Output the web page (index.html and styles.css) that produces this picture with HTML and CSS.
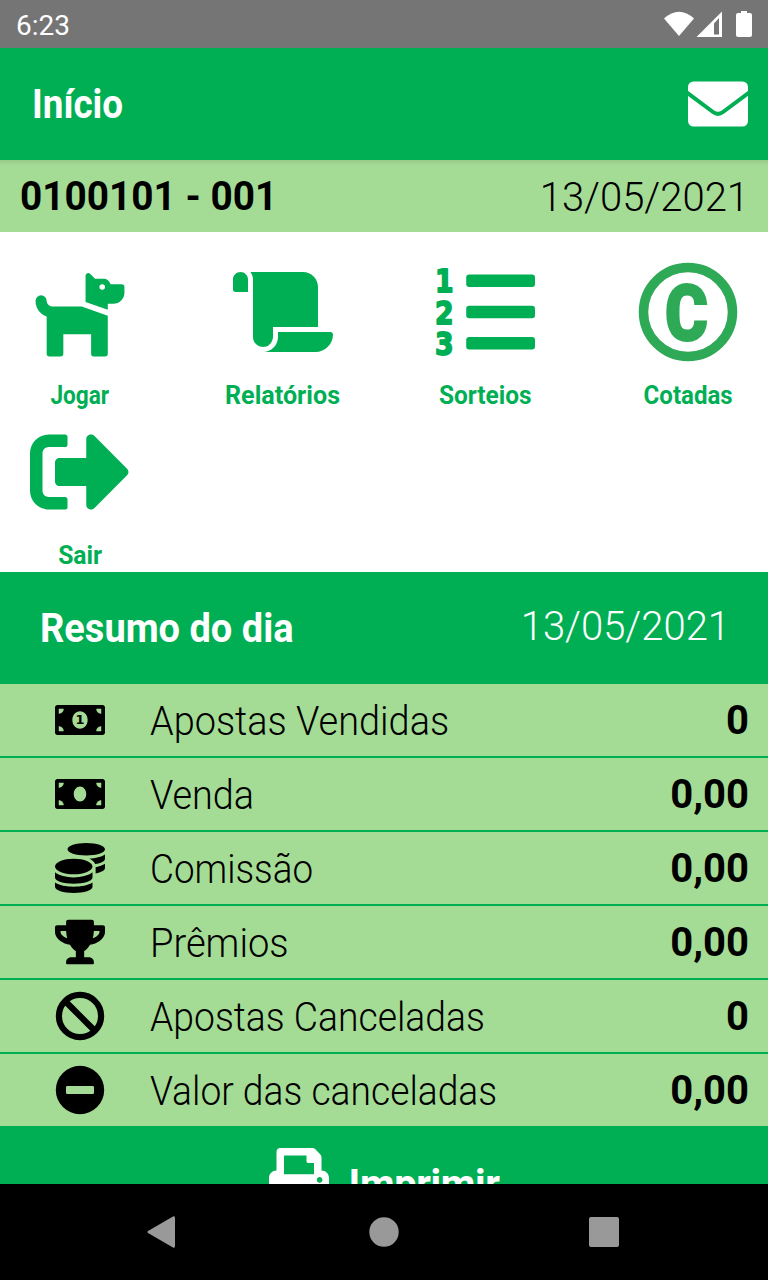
FILE: index.html
```html
<!DOCTYPE html>
<html lang="pt-BR">
<head>
<meta charset="utf-8">
<title>Início</title>
<link rel="stylesheet" href="styles.css">
</head>
<body>
<div class="status-bar">
  <span class="clock">6:23</span>
  <svg class="status-icons" viewBox="0 0 90 28" width="90" height="28">
    <path d="M1 8.500Q16-5 31 8.500L16 26z"/>
    <path fill-rule="evenodd" d="M33.500 27L59 1.500V27zM51 13.500V24.500H56V8z"/>
    <path d="M78 1h6v2h3q2 0 2 2v20q0 2-2 2H75q-2 0-2-2V5q0-2 2-2h3z"/>
  </svg>
</div>
<header class="app-bar">
  <h1 class="title inicio">Início</h1>
  <svg class="mail" viewBox="0 0 60 46" width="60" height="46">
    <rect y=".5" width="60" height="45" rx="5.500" fill="#fff"/>
    <path d="M-1 11.700L25 31Q30 34.800 35 31L61 11.700" fill="none" stroke="#00af54" stroke-width="4"/>
  </svg>
</header>
<div class="account">
  <span class="code">0100101 - 001</span>
  <span class="date">13/05/2021</span>
</div>
<nav class="menu">
  <a class="item"><svg viewBox="0 0 576 512" width="100" height="100"><path d="M298.060,224,448,277.550V496a16,16,0,0,1-16,16H368a16,16,0,0,1-16-16V384H192V496a16,16,0,0,1-16,16H112a16,16,0,0,1-16-16V282.090C58.840,268.840,32,233.660,32,192a32,32,0,0,1,64,0,32.060,32.060,0,0,0,32,32ZM544,112v32a64,64,0,0,1-64,64H448v35.580L320,197.870V48c0-14.250,17.220-21.390,27.310-11.310L374.590,64h53.630c10.910,0,23.750,7.920,28.620,17.690L464,96h64A16,16,0,0,1,544,112Zm-112,0a16,16,0,1,0-16,16A16,16,0,0,0,432,112Z"/></svg><span class="label l-jogar">Jogar</span></a>
  <a class="item"><svg viewBox="0 0 640 512" width="100" height="100"><path d="M48 0C21.530 0 0 21.530 0 48v64c0 8.840 7.160 16 16 16h80V48C96 21.530 74.470 0 48 0zm208 412.570V352h288V96c0-52.940-43.060-96-96-96H111.590C121.740 13.410 128 29.920 128 48v368c0 38.870 34.650 69.650 74.750 63.120C234.220 474 256 444.460 256 412.570zM288 384v32c0 52.930-43.060 96-96 96h336c61.860 0 112-50.140 112-112 0-8.840-7.160-16-16-16H288z"/></svg><span class="label l-rel">Relatórios</span></a>
  <a class="item"><svg viewBox="0 0 100 100" width="100" height="100">
    <rect x="31.200" y="12.500" width="68.800" height="12.500" rx="3"/><rect x="31.200" y="43.750" width="68.800" height="12.500" rx="3"/><rect x="31.200" y="75" width="68.800" height="12.500" rx="3"/>
    <g class="digits"><text x="0" y="30" textLength="18.500" lengthAdjust="spacingAndGlyphs">1</text><text x="0" y="61.700" textLength="18.500" lengthAdjust="spacingAndGlyphs">2</text><text x="0" y="92.500" textLength="18.500" lengthAdjust="spacingAndGlyphs">3</text></g></svg><span class="label l-sort">Sorteios</span></a>
  <a class="item"><svg viewBox="0 0 100 100" width="100" height="100"><circle cx="50" cy="50" r="44.500" fill="none" stroke="#2eaa57" stroke-width="9.500"/><text class="coin-letter" x="27" y="78" textLength="43" lengthAdjust="spacingAndGlyphs">C</text></svg><span class="label l-cot">Cotadas</span></a>
  <a class="item"><svg viewBox="0 0 512 512" width="100" height="100"><path d="M497 273L329 441c-15 15-41 4.500-41-17v-96H152c-13.300 0-24-10.700-24-24v-96c0-13.300 10.700-24 24-24h136V88c0-21.400 25.900-32 41-17l168 168c9.300 9.400 9.300 24.600 0 34zM192 436v-40c0-6.600-5.400-12-12-12H96c-17.700 0-32-14.300-32-32V160c0-17.700 14.300-32 32-32h84c6.600 0 12-5.400 12-12V76c0-6.600-5.400-12-12-12H96c-53 0-96 43-96 96v192c0 53 43 96 96 96h84c6.600 0 12-5.400 12-12z"/></svg><span class="label l-sair">Sair</span></a>
</nav>
<section class="summary-head">
  <h2 class="title resumo">Resumo do dia</h2>
  <span class="date light">13/05/2021</span>
</section>
<ul class="rows">
  <li class="row"><svg viewBox="0 0 640 512" width="50" height="50"><path fill-rule="evenodd" d="M608 64H32C14.330 64 0 78.330 0 96v320c0 17.670 14.330 32 32 32h576c17.670 0 32-14.330 32-32V96c0-17.670-14.330-32-32-32zM48 400v-64c35.350 0 64 28.650 64 64H48zm0-224v-64h64c0 35.350-28.650 64-64 64zm272 192c-55 0-98-50-98-112s43-112 98-112 98 50 98 112-43 112-98 112zm272 32h-64c0-35.350 28.650-64 64-64v64zm0-224c-35.350 0-64-28.650-64-64h64v64z"/><text class="bill-digit" x="320" y="313">1</text></svg><span class="name n1">Apostas Vendidas</span><b class="value">0</b></li>
  <li class="row"><svg viewBox="0 0 640 512" width="50" height="50"><path d="M608 64H32C14.330 64 0 78.330 0 96v320c0 17.670 14.330 32 32 32h576c17.670 0 32-14.330 32-32V96c0-17.670-14.330-32-32-32zM48 400v-64c35.350 0 64 28.650 64 64H48zm0-224v-64h64c0 35.350-28.650 64-64 64zm272 176c-44.190 0-80-42.990-80-96 0-53.020 35.820-96 80-96s80 42.980 80 96c0 53.030-35.830 96-80 96zm272 48h-64c0-35.350 28.650-64 64-64v64zm0-224c-35.350 0-64-28.650-64-64h64v64z"/></svg><span class="name n2">Venda</span><b class="value">0,00</b></li>
  <li class="row"><svg viewBox="0 0 512 512" width="50" height="50"><path d="M0 405.300V448c0 35.300 86 64 192 64s192-28.700 192-64v-42.700C342.700 434.400 267.200 448 192 448S41.300 434.400 0 405.300zM320 128c106 0 192-28.700 192-64S426 0 320 0 128 28.700 128 64s86 64 192 64zM0 300.400V352c0 35.300 86 64 192 64s192-28.700 192-64v-51.600c-41.300 34-116.900 51.600-192 51.600S41.300 334.400 0 300.400zm416 11c57.300-11.100 96-31.700 96-55.400v-42.700c-23.200 16.400-57.300 27.600-96 34.500v63.600zM192 160C86 160 0 195.800 0 240s86 80 192 80 192-35.800 192-80-86-80-192-80zm219.300 56.300c60-10.800 100.700-32 100.700-56.300v-42.700c-35.500 25.100-96.500 38.600-160.700 41.800 29.500 14.300 51.200 33.500 60 57.200z"/></svg><span class="name n3">Comissão</span><b class="value">0,00</b></li>
  <li class="row"><svg viewBox="0 0 576 512" width="50" height="50"><path d="M552 64H448V24c0-13.300-10.700-24-24-24H152c-13.300 0-24 10.700-24 24v40H24C10.700 64 0 74.700 0 88v56c0 35.700 22.500 72.400 61.900 100.700 31.500 22.700 69.800 37.100 110 41.700C203.300 338.500 240 360 240 360v72h-48c-35.300 0-64 20.700-64 56v12c0 6.600 5.400 12 12 12h296c6.600 0 12-5.400 12-12v-12c0-35.300-28.700-56-64-56h-48v-72s36.700-21.500 68.100-73.600c40.300-4.600 78.600-19 110-41.700 39.300-28.300 61.900-65 61.900-100.700V88c0-13.300-10.700-24-24-24zM99.300 192.800C74.900 175.200 64 155.600 64 144v-16h64.200c1 32.600 5.800 61.200 12.800 86.200-15.100-5.200-29.200-12.400-41.700-21.400zM512 144c0 16.100-17.700 36.100-35.300 48.800-12.500 9-26.700 16.200-41.800 21.400 7-25 11.800-53.600 12.800-86.200H512v16z"/></svg><span class="name n4">Prêmios</span><b class="value">0,00</b></li>
  <li class="row"><svg viewBox="0 0 50 50" width="50" height="50"><g fill="none" stroke="#000" stroke-width="6.200"><circle cx="25" cy="25" r="21.100"/><path d="M10 10L40 40"/></g></svg><span class="name n5">Apostas Canceladas</span><b class="value">0</b></li>
  <li class="row"><svg viewBox="0 0 50 50" width="50" height="50"><path fill-rule="evenodd" d="M25 .8a24.200 24.200 0 1 0 0 48.400a24.200 24.200 0 1 0 0-48.400zM12.200 21h25.600q1.200 0 1.200 1.200v5.600q0 1.200-1.200 1.200H12.200q-1.200 0-1.200-1.200v-5.600q0-1.200 1.200-1.200z"/></svg><span class="name n6">Valor das canceladas</span><b class="value">0,00</b></li>
</ul>
<div class="print">
  <svg viewBox="0 0 512 512" width="60" height="60"><path d="M448 192V77.250c0-8.490-3.370-16.620-9.370-22.630L393.370 9.370c-6-6-14.140-9.370-22.630-9.370H96C78.330 0 64 14.330 64 32v160c-35.350 0-64 28.650-64 64v112c0 8.840 7.160 16 16 16h48v96c0 17.670 14.330 32 32 32h320c17.670 0 32-14.330 32-32v-96h48c8.840 0 16-7.160 16-16V256c0-35.350-28.650-64-64-64zm-64 256H128v-96h256v96zm0-224H128V64h192v48c0 8.840 7.160 16 16 16h48v96zm48 72c-13.250 0-24-10.750-24-24 0-13.260 10.750-24 24-24s24 10.740 24 24c0 13.250-10.750 24-24 24z"/></svg>
  <span class="title imprimir">Imprimir</span>
</div>
<div class="nav-bar">
  <svg viewBox="0 0 768 96" width="768" height="96"><path d="M148 47L173 32.500Q175 31.500 175 34V62Q175 64.500 173 63.500L148 49Q146.500 48 148 47z"/><circle cx="384" cy="48" r="14.700"/><rect x="589" y="33" width="30" height="30" rx="2"/></svg>
</div>
</body>
</html>
```
FILE: styles.css
```css
* { box-sizing: border-box; }
body {
  margin: 0;
  width: 768px;
  height: 1280px;
  overflow: hidden;
  display: flex;
  flex-direction: column;
  background: #fff;
  color: #000;
  font-family: Roboto, "Open Sans", sans-serif;
  font-size: 40px;
}
svg { display: block; flex: none; overflow: visible; }
.status-bar {
  height: 48px;
  flex: none;
  display: flex;
  justify-content: space-between;
  align-items: center;
  padding: 0 15px 0 16px;
  background: #757575;
  color: #fff;
}
.clock { font-size: 28px; line-height: 48px; padding-top: 4px; }
.status-icons { fill: #fff; }
.app-bar {
  height: 112px;
  flex: none;
  display: flex;
  justify-content: space-between;
  align-items: center;
  padding: 0 20px 0 32px;
  background: #00af54;
}
.title {
  margin: 0;
  color: #fff;
  font-size: 40px;
  font-weight: 700;
  line-height: 72px;
  white-space: nowrap;
  transform-origin: left;
}
.inicio { transform: scaleX(.92); padding-top: 1px; }
.account {
  height: 72px;
  flex: none;
  display: flex;
  justify-content: space-between;
  padding: 1px 19px 0 20px;
  background: linear-gradient(#98cb88, #a5dc95 6px);
  line-height: 72px;
}
.code { font-weight: 700; transform: scaleX(.97); transform-origin: left; }
.date { font-weight: 300; padding-top: 1px; }
.menu {
  height: 340px;
  flex: none;
  padding-top: 20px;
  display: grid;
  grid-template-columns: repeat(4, 160px);
  justify-content: space-between;
  grid-auto-rows: 160px;
}
.item {
  display: flex;
  flex-direction: column;
  align-items: center;
  padding-top: 10px;
  color: #00af54;
  fill: #00af54;
}
.label {
  margin-top: 13px;
  font-size: 26px;
  font-weight: 700;
  line-height: 40px;
}
.l-jogar { transform: scaleX(.87); }
.l-rel { transform: scaleX(.966); }
.l-sort { transform: scaleX(.94); }
.l-cot { transform: scaleX(.925); }
.l-sair { transform: scaleX(.95); }
.digits { font: 700 32px "DejaVu Sans", sans-serif; stroke: #00af54; stroke-width: 1.800px; stroke-linejoin: round; }
.coin-letter { font: 900 77px Roboto, sans-serif; fill: #2eaa57; stroke: #2eaa57; stroke-width: 2px; }
.summary-head {
  height: 112px;
  flex: none;
  display: flex;
  justify-content: space-between;
  align-items: center;
  padding: 0 38px 0 40px;
  background: #00af54;
  color: #fff;
}
.resumo { transform: scaleX(.95); padding-top: 1px; }
.light { padding: 0 0 3px; }
.rows { margin: 0; padding: 0; list-style: none; flex: none; }
.row {
  height: 74px;
  display: flex;
  align-items: center;
  padding: 0 19px 0 55px;
  background: #a5dc95;
  border-bottom: 2px solid #00af54;
}
.row:last-child { height: 72px; border-bottom: 0; }
.name { margin-left: 45px; padding-top: 2px; font-weight: 300; white-space: nowrap; transform-origin: left; }
.n1 { transform: scaleX(.947); }
.n2 { transform: scaleX(.945); }
.n3 { transform: scaleX(.92); }
.n4 { transform: scaleX(.952); }
.n5 { transform: scaleX(.932); }
.n6 { transform: scaleX(.93); }
.value { margin-left: auto; font-weight: 700; }
.bill-digit { font: 700 165px "DejaVu Sans", sans-serif; text-anchor: middle; }
.print {
  height: 58px;
  flex: none;
  overflow: hidden;
  display: flex;
  justify-content: center;
  align-items: flex-start;
  gap: 20px;
  padding-top: 22px;
  background: #00af54;
  fill: #fff;
}
.imprimir { letter-spacing: -.4px; padding-top: 1px; }
.nav-bar { height: 96px; flex: none; background: #000; fill: #999; position: relative; }
```
